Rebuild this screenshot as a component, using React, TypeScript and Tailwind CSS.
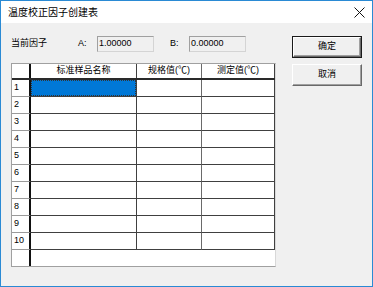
import React from 'react';

const font = { fontFamily: '"Liberation Sans", "Noto Sans CJK SC", sans-serif' };

const rows = [1, 2, 3, 4, 5, 6, 7, 8, 9, 10];

const Button = ({ label, isDefault }: { label: string; isDefault?: boolean }) => (
    <div className={`h-[22px] w-[70px] ${isDefault ? 'border border-[#1a1a1a]' : ''}`}>
        <div className="h-full w-full border border-t-white border-l-white border-r-[#696969] border-b-[#696969] bg-[#f0f0f0] shadow-[inset_-1px_-1px_0_#a0a0a0] flex items-center justify-center text-[9px] text-black">
            {label}
        </div>
    </div>
);

const Field = ({ value }: { value: string }) => (
    <div className="h-[16px] w-[57px] border border-t-[#a0a0a0] border-l-[#a0a0a0] border-r-[#d4d4d4] border-b-[#d4d4d4] bg-[#f0f0f0] flex items-center pl-[1px] text-[9px] text-black">
        {value}
    </div>
);

export default function App() {
    return (
        <div
            className="w-[373px] h-[287px] border border-[#2a8ad4] bg-[#f0f0f0] flex flex-col"
            style={font}
        >
            {/* Title bar */}
            <div className="h-[22px] bg-white flex items-center justify-between pl-[7px] pr-[6px] shrink-0">
                <span className="text-[10px] text-black">温度校正因子创建表</span>
                <svg width="11" height="11" viewBox="0 0 11 11" className="mr-[1px]">
                    <path d="M0.5 0.5 L10.5 10.5 M10.5 0.5 L0.5 10.5" stroke="#111" strokeWidth="1" />
                </svg>
            </div>

            {/* Body */}
            <div className="flex flex-1">
                <div className="ml-[10px] w-[265px] flex flex-col">
                    <div className="mt-[13px] h-[16px] flex items-center text-[9px] text-black">
                        <span className="w-[67px]">当前因子</span>
                        <span className="w-[19px]">A:</span>
                        <Field value="1.00000" />
                        <span className="ml-[16px] w-[19px]">B:</span>
                        <Field value="0.00000" />
                    </div>

                    {/* Grid */}
                    <div className="mt-[11px] h-[204px] border border-t-[#a0a0a0] border-l-[#a0a0a0] border-r-[#d8d8d8] border-b-[#a0a0a0] bg-white flex flex-col text-[9px] text-black">
                        <div className="flex h-[16px] border-b-2 border-[#2a2a2a]">
                            <div className="w-[19px] border-r-2 border-[#111]" />
                            <div className="w-[106px] border-r border-[#404040] flex items-center justify-center">标准样品名称</div>
                            <div className="w-[65px] border-r border-[#6a6a6a] flex items-center justify-center">规格值(℃)</div>
                            <div className="w-[73px] border-r border-[#404040] flex items-center justify-center">测定值(℃)</div>
                        </div>
                        {rows.map((n) => (
                            <div key={n} className="flex h-[17px]">
                                <div className="w-[19px] border-r-2 border-r-[#111] border-b border-b-[#9a9a9a] flex items-center pl-[2px]">
                                    {n}
                                </div>
                                <div className="w-[106px] border-r border-b border-[#404040] flex">
                                    {n === 1 && (
                                        <div className="flex-1 bg-[#0078d7] outline outline-1 outline-dotted outline-[#333] -outline-offset-1" />
                                    )}
                                </div>
                                <div className="w-[65px] border-r border-r-[#6a6a6a] border-b border-b-[#404040]" />
                                <div className="w-[73px] border-r border-b border-[#404040]" />
                            </div>
                        ))}
                        <div className="flex flex-1">
                            <div className="w-[19px] border-r-2 border-[#111]" />
                        </div>
                    </div>
                </div>

                <div className="ml-[16px] mt-[13px] flex flex-col gap-[6px]">
                    <Button label="确定" isDefault />
                    <Button label="取消" />
                </div>
            </div>
        </div>
    );
}
